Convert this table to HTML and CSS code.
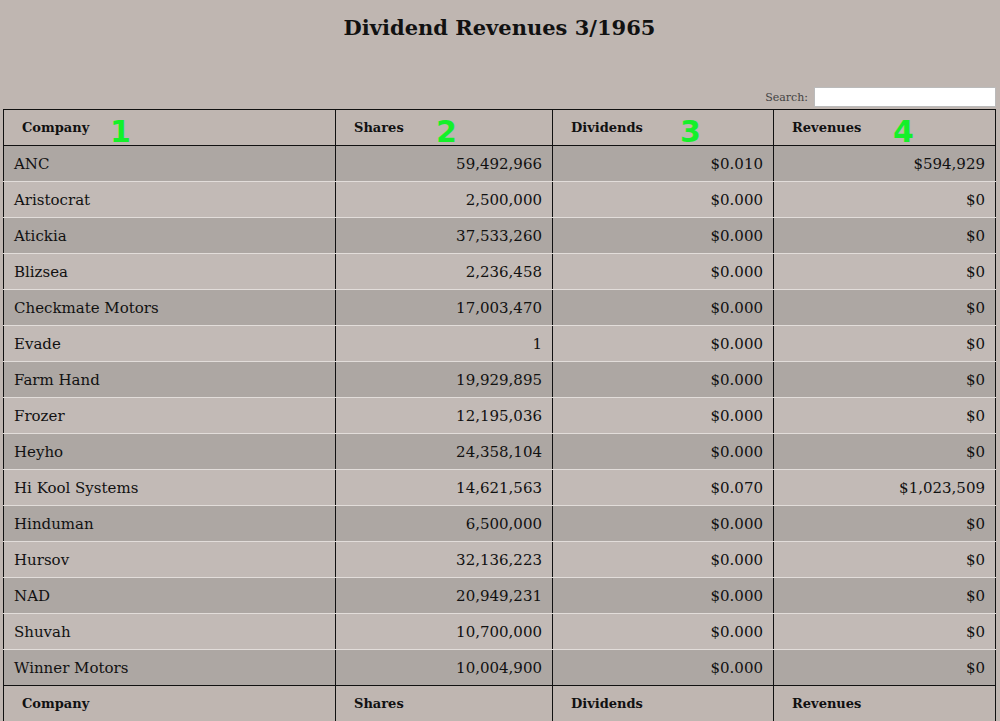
FILE: index.html
```html
<!DOCTYPE html>
<html>
<head>
<meta charset="utf-8">
<link rel="stylesheet" href="styles.css">
</head>
<body>
<h1 class="title">Dividend Revenues 3/1965</h1>
<div class="search-row">
  <label class="search-label">Search: <input class="search-input" type="text"></label>
</div>
<table class="data">
  <thead>
    <tr>
      <th class="col-company">Company<span class="mark mark-1">1</span></th>
      <th class="col-shares">Shares<span class="mark mark-2">2</span></th>
      <th class="col-div">Dividends<span class="mark mark-3">3</span></th>
      <th class="col-rev">Revenues<span class="mark mark-4">4</span></th>
    </tr>
  </thead>
  <tbody>
    <tr class="odd"><td>ANC</td><td class="num">59,492,966</td><td class="num">$0.010</td><td class="num">$594,929</td></tr>
    <tr class="even"><td>Aristocrat</td><td class="num">2,500,000</td><td class="num">$0.000</td><td class="num">$0</td></tr>
    <tr class="odd"><td>Atickia</td><td class="num">37,533,260</td><td class="num">$0.000</td><td class="num">$0</td></tr>
    <tr class="even"><td>Blizsea</td><td class="num">2,236,458</td><td class="num">$0.000</td><td class="num">$0</td></tr>
    <tr class="odd"><td>Checkmate Motors</td><td class="num">17,003,470</td><td class="num">$0.000</td><td class="num">$0</td></tr>
    <tr class="even"><td>Evade</td><td class="num">1</td><td class="num">$0.000</td><td class="num">$0</td></tr>
    <tr class="odd"><td>Farm Hand</td><td class="num">19,929,895</td><td class="num">$0.000</td><td class="num">$0</td></tr>
    <tr class="even"><td>Frozer</td><td class="num">12,195,036</td><td class="num">$0.000</td><td class="num">$0</td></tr>
    <tr class="odd"><td>Heyho</td><td class="num">24,358,104</td><td class="num">$0.000</td><td class="num">$0</td></tr>
    <tr class="even"><td>Hi Kool Systems</td><td class="num">14,621,563</td><td class="num">$0.070</td><td class="num">$1,023,509</td></tr>
    <tr class="odd"><td>Hinduman</td><td class="num">6,500,000</td><td class="num">$0.000</td><td class="num">$0</td></tr>
    <tr class="even"><td>Hursov</td><td class="num">32,136,223</td><td class="num">$0.000</td><td class="num">$0</td></tr>
    <tr class="odd"><td>NAD</td><td class="num">20,949,231</td><td class="num">$0.000</td><td class="num">$0</td></tr>
    <tr class="even"><td>Shuvah</td><td class="num">10,700,000</td><td class="num">$0.000</td><td class="num">$0</td></tr>
    <tr class="odd"><td>Winner Motors</td><td class="num">10,004,900</td><td class="num">$0.000</td><td class="num">$0</td></tr>
  </tbody>
  <tfoot>
    <tr>
      <th>Company</th>
      <th>Shares</th>
      <th>Dividends</th>
      <th>Revenues</th>
    </tr>
  </tfoot>
</table>
</body>
</html>
```
FILE: styles.css
```css
html, body {
  margin: 0;
  padding: 0;
}
body {
  background: #bfb6b1;
  font-family: "DejaVu Serif", serif;
  color: #111;
  padding: 0 4px 0 3px;
}
.title {
  margin: 0;
  padding-top: 14px;
  height: 87px;
  box-sizing: border-box;
  text-align: center;
  font-size: 21px;
  font-weight: bold;
  line-height: 28px;
  color: #111;
}
.search-row {
  display: flex;
  justify-content: flex-end;
  height: 22px;
}
.search-label {
  display: flex;
  align-items: center;
  gap: 6px;
  font-size: 11px;
  color: #444;
  height: 20px;
}
.search-input {
  width: 182px;
  height: 20px;
  box-sizing: border-box;
  border: 1px solid #bbb;
  background: #fff;
  margin: 0;
  padding: 0 4px;
}
.data {
  width: 993px;
  border-collapse: collapse;
  border: 1px solid #111;
  table-layout: fixed;
}
.data th {
  text-align: left;
  font-size: 13px;
  font-weight: bold;
  height: 36px;
  padding: 0 10px 0 18px;
  border-left: 1px solid #111;
  border-right: 1px solid #111;
  position: relative;
  box-sizing: border-box;
}
.data thead th {
  border-bottom: 1px solid #111;
}
.data tfoot th {
  border-top: 1px solid #111;
}
.col-company { width: 332px; }
.col-shares { width: 217px; }
.col-div { width: 221px; }
.col-rev { width: auto; }
.data td {
  font-size: 15px;
  height: 36px;
  padding: 0 10px;
  border-left: 1px solid #111;
  border-right: 1px solid #111;
  border-bottom: 1px solid #e2ddda;
  box-sizing: border-box;
  white-space: nowrap;
}
.data tbody tr:last-child td {
  border-bottom: none;
}
.data td.num {
  text-align: right;
}
.odd td {
  background: rgba(150, 148, 146, 0.45);
}
.even td {
  background: rgba(200, 195, 192, 0.35);
}
.mark {
  position: absolute;
  top: 7px;
  font-family: "DejaVu Sans", sans-serif;
  font-weight: bold;
  font-size: 30px;
  line-height: 30px;
  color: #14f02a;
}
.mark-1 { left: 106px; }
.mark-2 { left: 100px; }
.mark-3 { left: 127px; }
.mark-4 { left: 119px; }
```
